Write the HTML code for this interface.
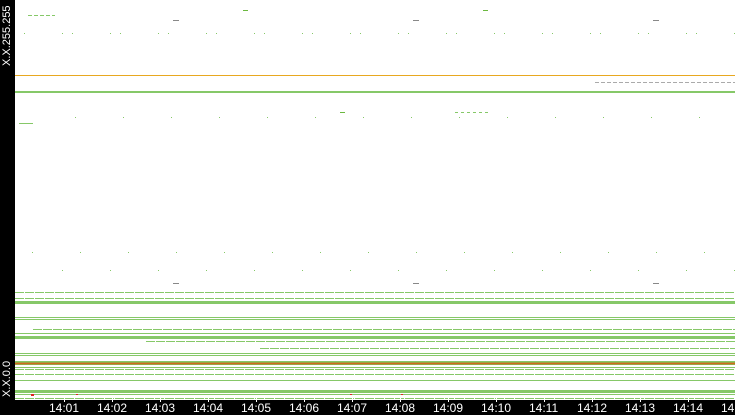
<!DOCTYPE html>
<html><head><style>
body{margin:0;width:735px;height:415px;background:#fff;position:relative;overflow:hidden;font-family:"Liberation Sans",sans-serif}
.l{position:absolute;left:15px;right:0;height:1px;background:#86c868}
.d{background:repeating-linear-gradient(90deg,#86c868 0 9px,#fff 9px 10px)}
.o{background:#e8a820}
.r{background:linear-gradient(#7cc860,#e05a10,#7cc860)}
.dr{position:absolute;left:15px;right:0;height:1px}
#lb{position:absolute;left:0;top:0;width:15px;height:415px;background:#000}
#bb{position:absolute;left:0;top:400px;width:735px;height:15px;background:#000}
.t{position:absolute;top:402px;color:#fff;font-size:12px;line-height:13px}
.tk{position:absolute;top:396px;width:1px;height:6px;background:#fff}
.yl{position:absolute;color:#fff;font-size:11px;transform:rotate(-90deg);transform-origin:left top;white-space:nowrap}
</style></head><body>
<div class="dr" style="top:33px;background:repeating-linear-gradient(90deg,transparent 0 47px,#86c868 47px 48px)"></div>
<div class="dr" style="top:33px;left:24px;background:repeating-linear-gradient(90deg,#86c868 0 1px,transparent 1px 48px)"></div>
<div class="dr" style="top:117px;left:75px;background:repeating-linear-gradient(90deg,#86c868 0 1px,transparent 1px 48px)"></div>
<div class="dr" style="top:252px;left:32px;background:repeating-linear-gradient(90deg,#86c868 0 1px,transparent 1px 48px)"></div>
<div class="dr" style="top:270px;left:62px;background:repeating-linear-gradient(90deg,#86c868 0 1px,transparent 1px 48px,#86c868 48px 49px,transparent 49px 96px)"></div>
<div style="position:absolute;left:173px;top:20px;width:6px;height:1px;background:#888"></div>
<div style="position:absolute;left:413px;top:20px;width:6px;height:1px;background:#888"></div>
<div style="position:absolute;left:653px;top:20px;width:6px;height:1px;background:#888"></div>
<div style="position:absolute;left:173px;top:283px;width:6px;height:1px;background:#888"></div>
<div style="position:absolute;left:413px;top:283px;width:6px;height:1px;background:#888"></div>
<div style="position:absolute;left:653px;top:283px;width:6px;height:1px;background:#888"></div>
<div style="position:absolute;left:340px;top:112px;width:5px;height:1px;background:#6cb840"></div>
<div style="position:absolute;left:455px;top:112px;width:35px;height:1px;background:repeating-linear-gradient(90deg,#86c868 0 3px,#fff 3px 6px)"></div>
<div style="position:absolute;left:595px;top:82px;width:140px;height:1px;background:repeating-linear-gradient(90deg,#aaa 0 4px,#fff 4px 6px)"></div>
<div class="l o" style="top:75px"></div>
<div class="l" style="top:91px;height:2px"></div>
<div class="l d" style="top:292px"></div>
<div class="l d" style="top:298px"></div>
<div class="l" style="top:301px;height:3px"></div>
<div class="l" style="top:317px"></div>
<div class="l" style="top:319px"></div>
<div class="l d" style="top:329px;left:33px"></div>
<div class="l" style="top:333px"></div>
<div class="l" style="top:336px;height:3px"></div>
<div class="l d" style="top:341px;left:146px"></div>
<div class="l d" style="top:348px;left:260px"></div>
<div class="l" style="top:353px"></div>
<div class="l" style="top:355px"></div>
<div class="l" style="top:361px"></div>
<div class="l r" style="top:362px;height:3px"></div>
<div class="l" style="top:367px"></div>
<div class="l d" style="top:369px"></div>
<div class="l d" style="top:374px"></div>
<div class="l" style="top:380px"></div>
<div class="l" style="top:390px;height:3px"></div>
<div class="l" style="top:394px"></div>
<div class="l d" style="top:398px"></div>
<div style="position:absolute;left:31px;top:394px;width:3px;height:2px;background:#e02020"></div>
<div style="position:absolute;left:76px;top:394px;width:2px;height:1px;background:#e02020"></div>
<div style="position:absolute;left:350px;top:394px;width:2px;height:1px;background:#e02020"></div>
<div style="position:absolute;left:401px;top:394px;width:2px;height:1px;background:#e02020"></div>
<div style="position:absolute;left:243px;top:10px;width:5px;height:1px;background:#6cb840"></div>
<div style="position:absolute;left:483px;top:10px;width:5px;height:1px;background:#6cb840"></div>
<div style="position:absolute;left:28px;top:15px;width:27px;height:1px;background:repeating-linear-gradient(90deg,#86c868 0 4px,#fff 4px 6px)"></div>
<div style="position:absolute;left:19px;top:123px;width:14px;height:1px;background:#86c868"></div>
<div id="lb"></div><div id="bb"></div>
<div class="yl" style="left:1px;top:66px">X.X.255.255</div>
<div class="yl" style="left:1px;top:397px">X.X.0.0</div>
<div class="tk" style="left:64px"></div><div class="t" style="left:49px">14:01</div>
<div class="tk" style="left:112px"></div><div class="t" style="left:97px">14:02</div>
<div class="tk" style="left:160px"></div><div class="t" style="left:145px">14:03</div>
<div class="tk" style="left:208px"></div><div class="t" style="left:193px">14:04</div>
<div class="tk" style="left:256px"></div><div class="t" style="left:241px">14:05</div>
<div class="tk" style="left:304px"></div><div class="t" style="left:289px">14:06</div>
<div class="tk" style="left:352px"></div><div class="t" style="left:337px">14:07</div>
<div class="tk" style="left:400px"></div><div class="t" style="left:385px">14:08</div>
<div class="tk" style="left:448px"></div><div class="t" style="left:433px">14:09</div>
<div class="tk" style="left:496px"></div><div class="t" style="left:481px">14:10</div>
<div class="tk" style="left:544px"></div><div class="t" style="left:529px">14:11</div>
<div class="tk" style="left:592px"></div><div class="t" style="left:577px">14:12</div>
<div class="tk" style="left:640px"></div><div class="t" style="left:625px">14:13</div>
<div class="tk" style="left:688px"></div><div class="t" style="left:673px">14:14</div>
<div class="t" style="left:721px">14</div>
</body></html>
